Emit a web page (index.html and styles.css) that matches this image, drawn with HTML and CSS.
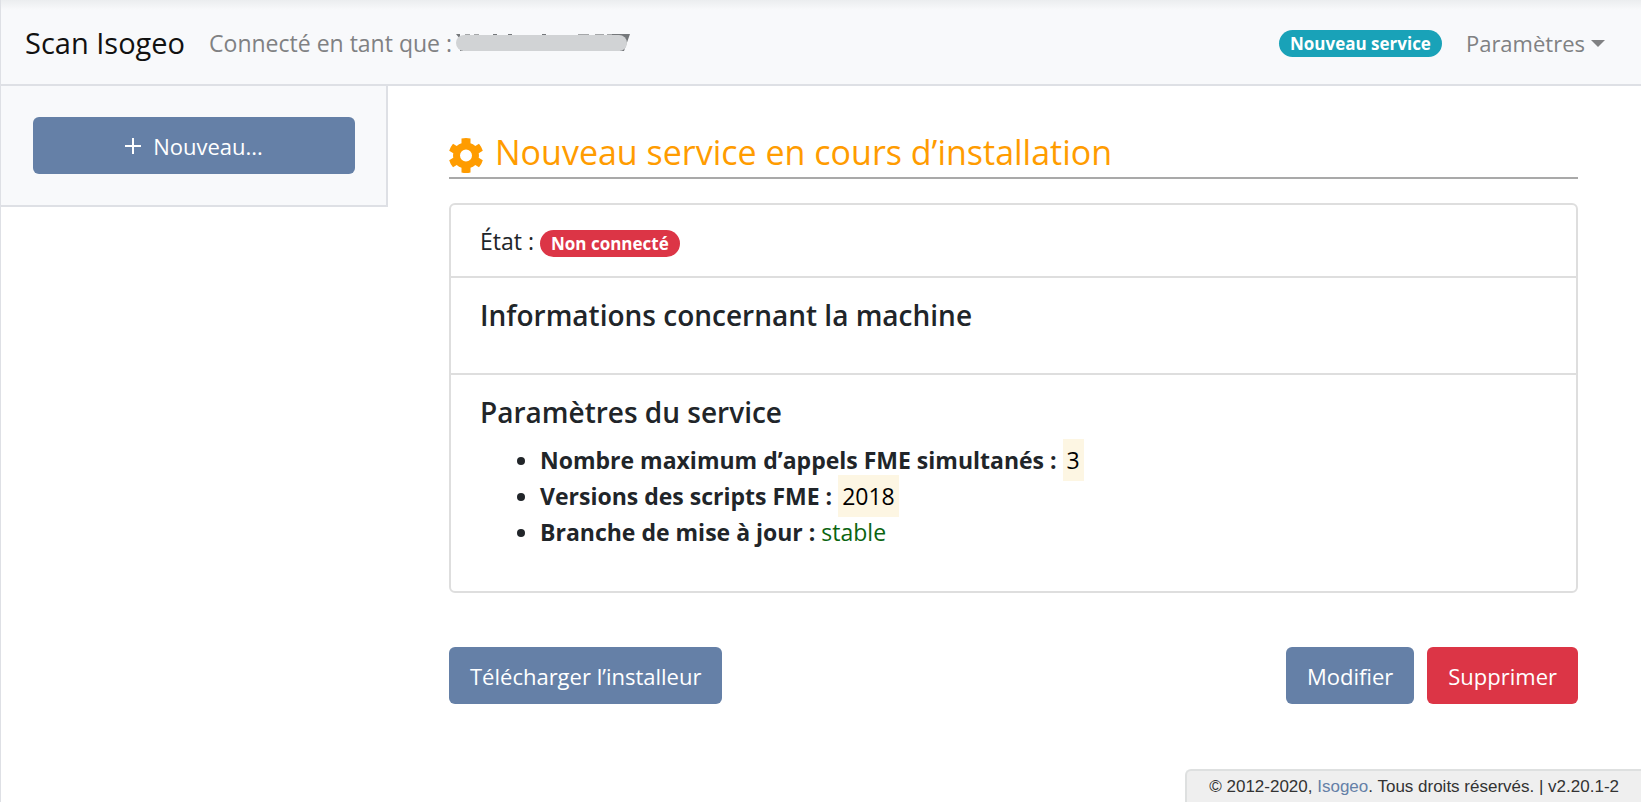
FILE: index.html
```html
<!DOCTYPE html>
<html lang="fr">
<head>
<meta charset="utf-8">
<title>Scan Isogeo</title>
<link rel="stylesheet" href="styles.css">
</head>
<body>
<header class="navbar">
  <a class="brand" href="#">Scan Isogeo</a>
  <p class="user">Connecté en tant que :
    <svg class="mask" viewBox="0 0 174 18" role="img" aria-label="Nom masqué">
      <path fill="#75787b" d="M0 0h4v5zM37 0h4v2h-4zM52 0h4v2h-4zM86 0h4v2h-4zM4 16h3v1h-3zM154 0h20l-6 17h-4z"/>
      <path fill="#a5a7a9" d="M9 0h5v2h-5zM18 0h5v2h-5zM122 0h11v2h-11zM139 0h9v2h-9zM151 0h5v2h-5z"/>
      <rect y="1" width="171" height="16" rx="8" fill="#d1d3d5"/>
    </svg>
  </p>
  <a class="badge badge-info" href="#">Nouveau service</a>
  <button class="menu" type="button">Paramètres<span class="caret"></span></button>
</header>
<div class="layout">
  <aside class="sidebar">
    <button class="btn btn-block" type="button">
      <svg class="plus" viewBox="0 0 16 16" aria-hidden="true"><path d="M8 0v16M0 8h16" stroke="currentColor" stroke-width="2"/></svg>
      Nouveau...
    </button>
  </aside>
  <main class="content">
    <h1 class="title">
      <svg class="gear" viewBox="0 0 34 35" aria-hidden="true"><path fill="currentColor" fill-rule="evenodd" d="M12.500 0.500Q17 -0.500 21.500 0.500V5.200Q24 6 26.300 7.900L30 5.700Q32.700 9 33.800 12.800L29.700 15.200Q30.200 17.500 29.700 19.800L33.800 22.200Q32.700 26 30 29.300L26.300 27.100Q24 29 21.500 29.800V34.500Q17 35.500 12.500 34.500V29.800Q10 29 7.700 27.100L4 29.300Q1.300 26 0.200 22.200L4.300 19.800Q3.800 17.500 4.300 15.200L0.200 12.800Q1.300 9 4 5.700L7.700 7.900Q10 6 12.500 5.200ZM17 11.500A6 6 0 1 0 17 23.500A6 6 0 1 0 17 11.500Z"/></svg>
      <span>Nouveau service en cours d’installation</span>
    </h1>
    <div class="card">
      <section class="panel state">État : <span class="badge badge-danger">Non connecté</span></section>
      <section class="panel machine"><h2 class="subtitle">Informations concernant la machine</h2></section>
      <section class="panel settings">
        <h2 class="subtitle">Paramètres du service</h2>
        <ul class="list">
          <li><strong>Nombre maximum d’appels FME simultanés :</strong> <span class="mark">3</span></li>
          <li><strong>Versions des scripts FME :</strong> <span class="mark">2018</span></li>
          <li><strong>Branche de mise à jour :</strong> <span class="stable">stable</span></li>
        </ul>
      </section>
    </div>
    <div class="actions">
      <button class="btn" type="button">Télécharger l’installeur</button>
      <div class="group">
        <button class="btn" type="button">Modifier</button>
        <button class="btn btn-danger" type="button">Supprimer</button>
      </div>
    </div>
  </main>
</div>
<footer class="footer">© 2012-2020, <a href="#">Isogeo</a>. Tous droits réservés. | v2.20.1-2</footer>
</body>
</html>
```
FILE: styles.css
```css
* { box-sizing: border-box; }
body {
  margin: 0;
  min-height: 100vh;
  border-left: 1px solid #dee0e5;
  background: #fff;
  color: #212529;
  font: 23px/36px "Open Sans", "Noto Sans", sans-serif;
}
h1, h2, p, ul { margin: 0; }
button { font: inherit; border: 0; cursor: pointer; }
a { text-decoration: none; }
.navbar {
  display: flex;
  align-items: center;
  gap: 24px;
  padding: 25px 36px 23px 24px;
  background: linear-gradient(#ebedef, #f8f9fb 10px);
  border-bottom: 2px solid #dee0e5;
}
.brand { font-size: 29px; color: #111; }
.user { display: flex; align-items: center; gap: 4px; margin-right: auto; color: #808183; }
.mask { width: 174px; height: 18px; }
.menu {
  display: flex;
  align-items: center;
  gap: 6px;
  padding: 0;
  background: none;
  color: #808183;
  font-size: 22px;
}
.caret { border: 7px solid transparent; border-top-color: currentColor; border-bottom: 0; }
.badge {
  display: inline-block;
  padding: 5px 11px;
  border-radius: 14px;
  font-size: 17px;
  line-height: 17px;
  font-weight: 700;
  color: #fff;
  vertical-align: middle;
}
.badge-info { background: #19a2b8; }
.badge-danger { background: #dc3546; }
.layout { display: flex; align-items: flex-start; }
.sidebar {
  flex: 0 0 387px;
  padding: 31px 31px 31px 32px;
  background: #f8f9fb;
  border: solid #dee0e5;
  border-width: 0 2px 2px 0;
}
.btn {
  display: flex;
  align-items: center;
  justify-content: center;
  padding: 11px 21px 10px;
  border-radius: 6px;
  background: #6580a7;
  color: #fff;
  font-size: 22px;
}
.btn-block { width: 100%; gap: 12px; }
.btn-danger { background: #dc3546; }
.plus { width: 16px; height: 16px; }
.content { flex: 1; padding: 42px 63px 0 61px; }
.title {
  display: flex;
  align-items: flex-end;
  gap: 12px;
  border-bottom: 2px solid #a9a9a9;
  color: #ff9c00;
  font-size: 34px;
  font-weight: 400;
  line-height: 49px;
}
.gear { width: 34px; height: 35px; margin-bottom: 4px; }
.card { margin-top: 24px; border: 2px solid #dedede; border-radius: 6px; }
.panel { padding: 17px 29px; }
.panel + .panel { border-top: 2px solid #dedede; }
.subtitle { font-size: 28px; font-weight: 600; line-height: 40px; }
.state { padding-top: 18px; }
.machine { padding-bottom: 38px; }
.settings { padding-bottom: 41px; }
.list { padding-left: 60px; margin-top: 10px; }
.mark { padding: 5px 4px; background: #fdf6e3; color: #000; }
.stable { color: #0a6410; }
.actions { display: flex; justify-content: space-between; margin-top: 54px; }
.group { display: flex; gap: 13px; }
.footer {
  position: fixed;
  right: 0;
  bottom: 0;
  padding: 5px 22px 4px;
  border: solid #dee0e0;
  border-width: 2px 0 0 2px;
  border-top-left-radius: 6px;
  background: #efefef;
  color: #333;
  font: 17px/22px "Liberation Sans", sans-serif;
}
.footer a { color: #6580a7; }
```
